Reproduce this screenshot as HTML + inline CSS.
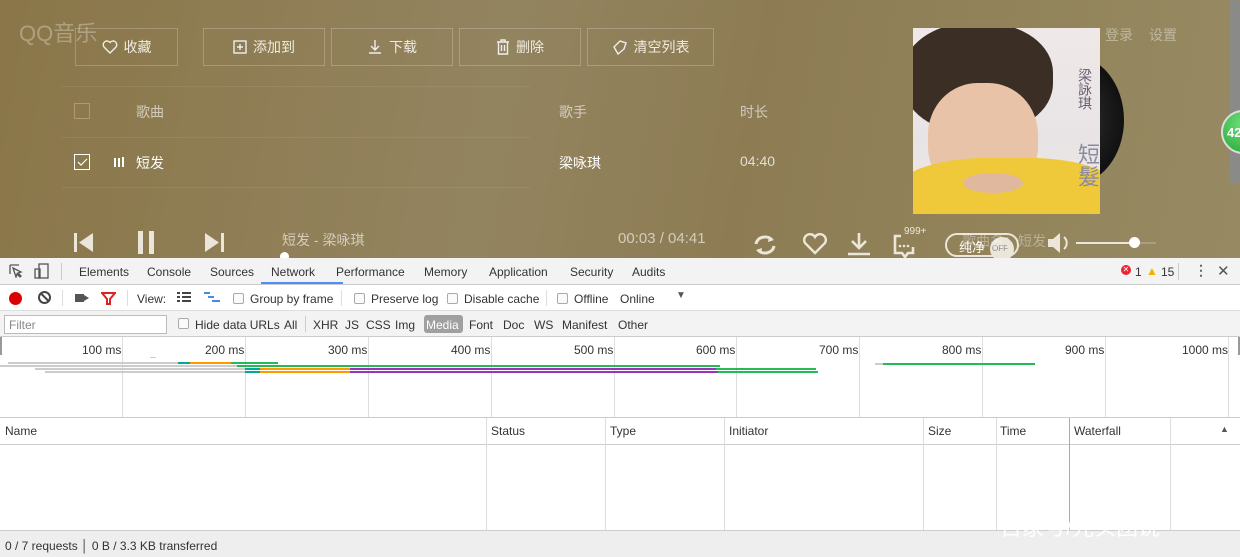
<!DOCTYPE html>
<html><head><meta charset="utf-8"><style>
*{margin:0;padding:0;box-sizing:border-box}
body{width:1240px;height:557px;overflow:hidden;font-family:"Liberation Sans","Noto Sans CJK SC",sans-serif;position:relative;background:#fff}
.top{position:absolute;left:0;top:0;width:1240px;height:258px;background:linear-gradient(100deg,#8a7648 0%,#938460 40%,#8d7c53 60%,#978a62 100%);overflow:hidden;color:#efe9dc}
.a{position:absolute}
.btn{position:absolute;top:28px;height:38px;border:1px solid rgba(255,255,255,.22);font-size:14px;color:#f0ebe0;display:flex;align-items:center;justify-content:center;gap:6px}
.line{position:absolute;left:62px;width:468px;height:1px;background:rgba(255,255,255,.08)}
.dt{position:absolute;left:0;width:1240px;font-size:12px;color:#333}
.dt span{position:absolute}
.cb{display:inline-block;width:11px;height:11px;border:1px solid #aaa;border-radius:2px;background:#fafafa;position:absolute}
.vl{position:absolute;width:1px;background:#ddd}
</style></head><body>
<div class="top">
<div class="a" style="left:19px;top:16px;font-size:22px;color:rgba(255,255,255,.3)">QQ音乐</div>
<div class="btn" style="left:75px;width:103px"><svg width="16" height="14" viewBox="0 0 16 14"><path d="M8 13 L2 7 A3.3 3.3 0 0 1 8 2.5 A3.3 3.3 0 0 1 14 7 Z" fill="none" stroke="#eee" stroke-width="1.4"/></svg>收藏</div>
<div class="btn" style="left:203px;width:122px"><svg width="14" height="14"><rect x="1" y="1" width="12" height="12" fill="none" stroke="#eee" stroke-width="1.4"/><path d="M7 4v6M4 7h6" stroke="#eee" stroke-width="1.4"/></svg>添加到</div>
<div class="btn" style="left:331px;width:122px"><svg width="16" height="16"><path d="M8 1v10M4 7l4 4 4-4M2 14h12" fill="none" stroke="#eee" stroke-width="1.4"/></svg>下载</div>
<div class="btn" style="left:459px;width:122px"><svg width="14" height="16"><path d="M1 3h12M5 3V1h4v2M2.5 3v12h9V3M5.5 6v6M8.5 6v6" fill="none" stroke="#eee" stroke-width="1.4"/></svg>删除</div>
<div class="btn" style="left:587px;width:127px"><svg width="16" height="16"><path d="M2 8l6-6 6 2-2 6-6 5z" fill="none" stroke="#eee" stroke-width="1.4"/></svg>清空列表</div>
<div class="line" style="top:86px"></div><div class="line" style="top:137px"></div><div class="line" style="top:187px"></div>
<div class="a" style="left:74px;top:103px;width:16px;height:16px;border:1px solid rgba(255,255,255,.25)"></div>
<div class="a" style="left:136px;top:102px;font-size:14px;color:rgba(255,255,255,.6)">歌曲</div>
<div class="a" style="left:559px;top:102px;font-size:14px;color:rgba(255,255,255,.6)">歌手</div>
<div class="a" style="left:740px;top:102px;font-size:14px;color:rgba(255,255,255,.6)">时长</div>
<div class="a" style="left:74px;top:154px;width:16px;height:16px;border:1px solid #fff"><svg width="14" height="14" style="position:absolute;left:0;top:0"><path d="M3 7l3 3 6-6" fill="none" stroke="#fff" stroke-width="1.2"/></svg></div>
<div class="a" style="left:114px;top:158px;width:2px;height:9px;background:#fff"></div><div class="a" style="left:118px;top:158px;width:2px;height:9px;background:#fff"></div><div class="a" style="left:122px;top:157px;width:2px;height:10px;background:#fff"></div>
<div class="a" style="left:136px;top:153px;font-size:14px;color:#fff">短发</div>
<div class="a" style="left:559px;top:153px;font-size:14px;color:#fff">梁咏琪</div>
<div class="a" style="left:740px;top:153px;font-size:14px;color:rgba(255,255,255,.75)">04:40</div>
<div class="a" style="left:1040px;top:38px;width:18px;height:168px;background:#b4a888;border-radius:3px"></div>
<div class="a" style="left:1020px;top:55px;width:104px;height:130px;border-radius:50%;background:radial-gradient(circle at 40% 50%,#444 0,#222 40%,#111 70%)"></div>
<div class="a" style="left:913px;top:28px;width:187px;height:186px;background:linear-gradient(180deg,#efe8e8 0%,#e8e4e6 60%,#f0e9e0 100%);overflow:hidden">
<div class="a" style="left:-10px;top:-5px;width:150px;height:110px;border-radius:45%;background:#3b2e24"></div>
<div class="a" style="left:15px;top:55px;width:110px;height:115px;border-radius:45%;background:#e8c3a8"></div>
<div class="a" style="left:-20px;top:130px;width:230px;height:90px;border-radius:40% 40% 0 0;background:#f0c93a"></div>
<div class="a" style="left:50px;top:145px;width:60px;height:20px;border-radius:50%;background:#e0b89d"></div>
<div class="a" style="left:162px;top:40px;font-size:14px;color:#6a6070;writing-mode:vertical-rl">梁詠琪</div>
<div class="a" style="left:158px;top:115px;font-size:22px;color:#8a8aa0;writing-mode:vertical-rl">短髮</div>
</div>
<div class="a" style="left:1105px;top:25px;font-size:14px;color:rgba(255,255,255,.4)">登录</div>
<div class="a" style="left:1149px;top:25px;font-size:14px;color:rgba(255,255,255,.4)">设置</div>
<div class="a" style="left:1229px;top:0;width:11px;height:183px;background:#8a8a88;border-radius:3px"></div>
<div class="a" style="left:1221px;top:110px;width:44px;height:44px;border-radius:50%;background:radial-gradient(circle at 50% 30%,#6ee07a,#2aa83a);border:2px solid #ddd;color:#fff;font-size:13px;font-weight:bold;padding:13px 0 0 4px">42</div>
<svg class="a" style="left:73px;top:232px" width="22" height="22"><rect x="1" y="1" width="3" height="19" fill="#ece6da"/><path d="M20 1v19L6 10.5z" fill="#ece6da"/></svg>
<svg class="a" style="left:137px;top:231px" width="22" height="24"><rect x="1" y="0" width="5" height="23" fill="#ece6da"/><rect x="12" y="0" width="5" height="23" fill="#ece6da"/></svg>
<svg class="a" style="left:204px;top:232px" width="22" height="22"><path d="M1 1v19L15 10.5z" fill="#ece6da"/><rect x="17" y="1" width="3" height="19" fill="#ece6da"/></svg>
<div class="a" style="left:282px;top:230px;font-size:14px;color:rgba(255,255,255,.6)">短发 - 梁咏琪</div>
<div class="a" style="left:618px;top:230px;font-size:15px;color:rgba(255,255,255,.6)">00:03 / 04:41</div>
<div class="a" style="left:280px;top:252px;width:9px;height:9px;border-radius:50%;background:#fff"></div>
<svg class="a" style="left:752px;top:232px" width="26" height="26"><path d="M4 12a9 8 0 0 1 16-4M22 14a9 8 0 0 1-16 4" fill="none" stroke="#ece6da" stroke-width="3"/><path d="M17 4l5 4-6 2zM9 22l-5-4 6-2z" fill="#ece6da"/></svg>
<svg class="a" style="left:802px;top:233px" width="26" height="22"><path d="M13 20L3 10A5 5 0 0 1 13 4A5 5 0 0 1 23 10Z" fill="none" stroke="#ece6da" stroke-width="2.4"/></svg>
<svg class="a" style="left:846px;top:232px" width="26" height="24"><path d="M13 1v14M6 9l7 7 7-7M2 22h22" fill="none" stroke="#ece6da" stroke-width="2.6"/></svg>
<svg class="a" style="left:893px;top:232px" width="26" height="26"><path d="M8 4H2v17h7l3 4 3-4h5v-6" fill="none" stroke="#ece6da" stroke-width="2.6"/><circle cx="7" cy="14" r="1.3" fill="#ece6da"/><circle cx="11" cy="14" r="1.3" fill="#ece6da"/><circle cx="15" cy="14" r="1.3" fill="#ece6da"/></svg>
<div class="a" style="left:904px;top:226px;font-size:10px;color:#ece6da">999+</div>
<div class="a" style="left:945px;top:233px;width:74px;height:24px;border:2px solid #ece6da;border-radius:12px;font-size:13px;color:#fff;padding:2px 0 0 12px">纯净</div>
<div class="a" style="left:990px;top:237px;width:24px;height:24px;border-radius:50%;background:#ece6da;font-size:8px;color:#888;padding:7px 0 0 2px">OFF</div>
<div class="a" style="left:962px;top:231px;font-size:14px;color:rgba(255,255,255,.35)">歌曲名：短发</div>
<svg class="a" style="left:1046px;top:232px" width="26" height="22"><path d="M2 7h5l7-6v20l-7-6H2z" fill="#ece6da"/><path d="M18 5a8 8 0 0 1 0 12" fill="none" stroke="#ece6da" stroke-width="2"/></svg>
<div class="a" style="left:1076px;top:242px;width:60px;height:2px;background:#ece6da"></div>
<div class="a" style="left:1136px;top:242px;width:20px;height:2px;background:rgba(255,255,255,.2)"></div>
<div class="a" style="left:1129px;top:237px;width:11px;height:11px;border-radius:50%;background:#fff"></div>
</div>

<div class="dt" style="top:258px;height:27px;background:#f3f3f3;border-bottom:1px solid #ccc">
<svg style="position:absolute;left:9px;top:6px" width="14" height="14"><path d="M1 1h9M1 1v9M4 4l8 4-3 1 3 3-1 1-3-3-1 3z" fill="none" stroke="#555" stroke-width="1.3"/></svg>
<svg style="position:absolute;left:34px;top:5px" width="16" height="16"><rect x="5" y="1" width="9" height="14" fill="none" stroke="#555" stroke-width="1.3"/><rect x="1" y="6" width="5" height="9" fill="none" stroke="#555" stroke-width="1.3"/></svg>
<div class="vl" style="left:61px;top:5px;height:17px;background:#ccc"></div>
<span style="left:79px;top:7px">Elements</span><span style="left:147px;top:7px">Console</span><span style="left:210px;top:7px">Sources</span><span style="left:271px;top:7px">Network</span>
<div style="position:absolute;left:261px;top:24px;width:82px;height:2px;background:#4d8ff0"></div>
<span style="left:336px;top:7px">Performance</span><span style="left:424px;top:7px">Memory</span><span style="left:489px;top:7px">Application</span><span style="left:570px;top:7px">Security</span><span style="left:632px;top:7px">Audits</span>
<span style="left:1121px;top:7px;width:10px;height:10px;border-radius:50%;background:#e23;color:#fff;font-size:8px;line-height:10px;text-align:center">✕</span>
<span style="left:1135px;top:7px">1</span>
<span style="left:1146px;top:6px;color:#f0b400;font-size:12px">▲</span>
<span style="left:1161px;top:7px">15</span>
<div class="vl" style="left:1178px;top:5px;height:17px;background:#ccc"></div>
<span style="left:1194px;top:4px;font-size:14px;color:#666;font-weight:bold">⋮</span>
<span style="left:1217px;top:4px;font-size:15px;color:#555">✕</span>
</div>
<div class="dt" style="top:285px;height:26px;background:#fff;border-bottom:1px solid #ddd">
<span style="left:9px;top:7px;width:13px;height:13px;border-radius:50%;background:#d00"></span>
<span style="left:38px;top:6px;width:13px;height:13px;border-radius:50%;border:2px solid #444"></span>
<span style="left:44px;top:7px;width:2px;height:11px;background:#444;transform:rotate(-45deg)"></span>
<div class="vl" style="left:62px;top:5px;height:16px"></div>
<span style="left:75px;top:9px;width:9px;height:8px;background:#555"></span><span style="left:84px;top:10px;border-left:5px solid #555;border-top:3px solid transparent;border-bottom:3px solid transparent"></span>
<svg style="position:absolute;left:101px;top:7px" width="15" height="13"><path d="M1 1h13l-5 6v5h-3V7z" fill="none" stroke="#d22" stroke-width="2"/></svg>
<div class="vl" style="left:127px;top:5px;height:16px"></div>
<span style="left:137px;top:7px">View:</span>
<svg style="position:absolute;left:177px;top:7px" width="14" height="12"><path d="M0 1h3M5 1h9M0 5h3M5 5h9M0 9h3M5 9h9" stroke="#444" stroke-width="2"/></svg>
<svg style="position:absolute;left:204px;top:7px" width="16" height="12"><path d="M0 1h6M4 5h6M8 9h8" stroke="#4a8ae0" stroke-width="2"/></svg>
<i class="cb" style="left:233px;top:8px"></i><span style="left:250px;top:7px">Group by frame</span>
<div class="vl" style="left:341px;top:5px;height:16px"></div>
<i class="cb" style="left:354px;top:8px"></i><span style="left:371px;top:7px">Preserve log</span>
<i class="cb" style="left:447px;top:8px"></i><span style="left:464px;top:7px">Disable cache</span>
<div class="vl" style="left:546px;top:5px;height:16px"></div>
<i class="cb" style="left:557px;top:8px"></i><span style="left:574px;top:7px">Offline</span>
<span style="left:620px;top:7px">Online</span>
<span style="left:676px;top:5px;font-size:10px;color:#555">▼</span>
</div>
<div class="dt" style="top:311px;height:26px;background:#f3f3f3;border-bottom:1px solid #ccc">
<span style="left:4px;top:4px;width:163px;height:19px;border:1px solid #bbb;background:#fff;color:#888;padding:2px 4px">Filter</span>
<i class="cb" style="left:178px;top:7px"></i><span style="left:195px;top:7px">Hide data URLs</span>
<span style="left:284px;top:7px">All</span>
<div class="vl" style="left:305px;top:5px;height:16px;background:#ccc"></div>
<span style="left:313px;top:7px">XHR</span><span style="left:345px;top:7px">JS</span><span style="left:366px;top:7px">CSS</span><span style="left:395px;top:7px">Img</span>
<span style="left:424px;top:4px;width:39px;height:18px;border-radius:3px;background:#a0a0a0;color:#fff;padding:3px 0 0 2px">Media</span>
<span style="left:469px;top:7px">Font</span><span style="left:503px;top:7px">Doc</span><span style="left:534px;top:7px">WS</span><span style="left:562px;top:7px">Manifest</span><span style="left:618px;top:7px">Other</span>
</div>
<div class="dt" style="top:337px;height:81px;background:#fff;border-bottom:1px solid #ccc">
<div class="vl" style="left:122px;top:0;height:80px"></div><div class="vl" style="left:245px;top:0;height:80px"></div><div class="vl" style="left:368px;top:0;height:80px"></div><div class="vl" style="left:491px;top:0;height:80px"></div><div class="vl" style="left:614px;top:0;height:80px"></div><div class="vl" style="left:736px;top:0;height:80px"></div><div class="vl" style="left:859px;top:0;height:80px"></div><div class="vl" style="left:982px;top:0;height:80px"></div><div class="vl" style="left:1105px;top:0;height:80px"></div><div class="vl" style="left:1228px;top:0;height:80px"></div>
<div style="position:absolute;left:0;top:0;width:2px;height:18px;background:#999"></div>
<div style="position:absolute;left:1238px;top:0;width:2px;height:18px;background:#999"></div>
<span style="left:82px;top:6px">100 ms</span><span style="left:205px;top:6px">200 ms</span><span style="left:328px;top:6px">300 ms</span><span style="left:451px;top:6px">400 ms</span><span style="left:574px;top:6px">500 ms</span><span style="left:696px;top:6px">600 ms</span><span style="left:819px;top:6px">700 ms</span><span style="left:942px;top:6px">800 ms</span><span style="left:1065px;top:6px">900 ms</span><span style="left:1182px;top:6px">1000 ms</span>
<div style="position:absolute;left:150px;top:20px;width:6px;height:1px;background:#ccc"></div>
<div style="position:absolute;left:8px;top:25px;width:170px;height:2px;background:#ccc"></div>
<div style="position:absolute;left:178px;top:25px;width:53px;height:2px;background:#0a9"></div>
<div style="position:absolute;left:190px;top:25px;width:42px;height:2px;background:#f90"></div>
<div style="position:absolute;left:231px;top:25px;width:47px;height:2px;background:#2b5"></div>
<div style="position:absolute;left:0px;top:28px;width:237px;height:2px;background:#ccc"></div>
<div style="position:absolute;left:237px;top:28px;width:483px;height:2px;background:#2b5"></div>
<div style="position:absolute;left:35px;top:31px;width:210px;height:2px;background:#ccc"></div>
<div style="position:absolute;left:245px;top:31px;width:15px;height:2px;background:#0a9"></div>
<div style="position:absolute;left:260px;top:31px;width:90px;height:2px;background:#f90"></div>
<div style="position:absolute;left:350px;top:31px;width:366px;height:2px;background:#93b"></div>
<div style="position:absolute;left:716px;top:31px;width:100px;height:2px;background:#2b5"></div>
<div style="position:absolute;left:45px;top:34px;width:200px;height:2px;background:#ccc"></div>
<div style="position:absolute;left:245px;top:34px;width:15px;height:2px;background:#0a9"></div>
<div style="position:absolute;left:260px;top:34px;width:90px;height:2px;background:#f90"></div>
<div style="position:absolute;left:350px;top:34px;width:368px;height:2px;background:#93b"></div>
<div style="position:absolute;left:718px;top:34px;width:100px;height:2px;background:#2b5"></div>
<div style="position:absolute;left:875px;top:26px;width:8px;height:2px;background:#ccc"></div>
<div style="position:absolute;left:883px;top:26px;width:152px;height:2px;background:#2b5"></div>
</div>
<div class="dt" style="top:418px;height:112px;background:#fff">
<div style="position:absolute;left:0;top:26px;width:1240px;height:1px;background:#ccc"></div>
<div class="vl" style="left:486px;top:0;height:112px"></div><div class="vl" style="left:605px;top:0;height:112px"></div><div class="vl" style="left:724px;top:0;height:112px"></div><div class="vl" style="left:923px;top:0;height:112px"></div><div class="vl" style="left:996px;top:0;height:112px"></div><div class="vl" style="left:1069px;top:0;height:112px;background:#aaa"></div><div class="vl" style="left:1170px;top:0;height:112px"></div>
<span style="left:5px;top:6px">Name</span><span style="left:491px;top:6px">Status</span><span style="left:610px;top:6px">Type</span><span style="left:729px;top:6px">Initiator</span><span style="left:928px;top:6px">Size</span><span style="left:1000px;top:6px">Time</span><span style="left:1074px;top:6px">Waterfall</span><span style="left:1220px;top:6px;font-size:9px;color:#555">▲</span>
</div>
<div class="dt" style="top:530px;height:27px;background:#eee;border-top:1px solid #ccc">
<span style="left:5px;top:8px">0 / 7 requests │ 0 B / 3.3 KB transferred</span>
</div>
<div class="a" style="left:1000px;top:510px;font-size:22px;color:rgba(255,255,255,.9);white-space:nowrap">百家号/光头团说</div>
</body></html>
